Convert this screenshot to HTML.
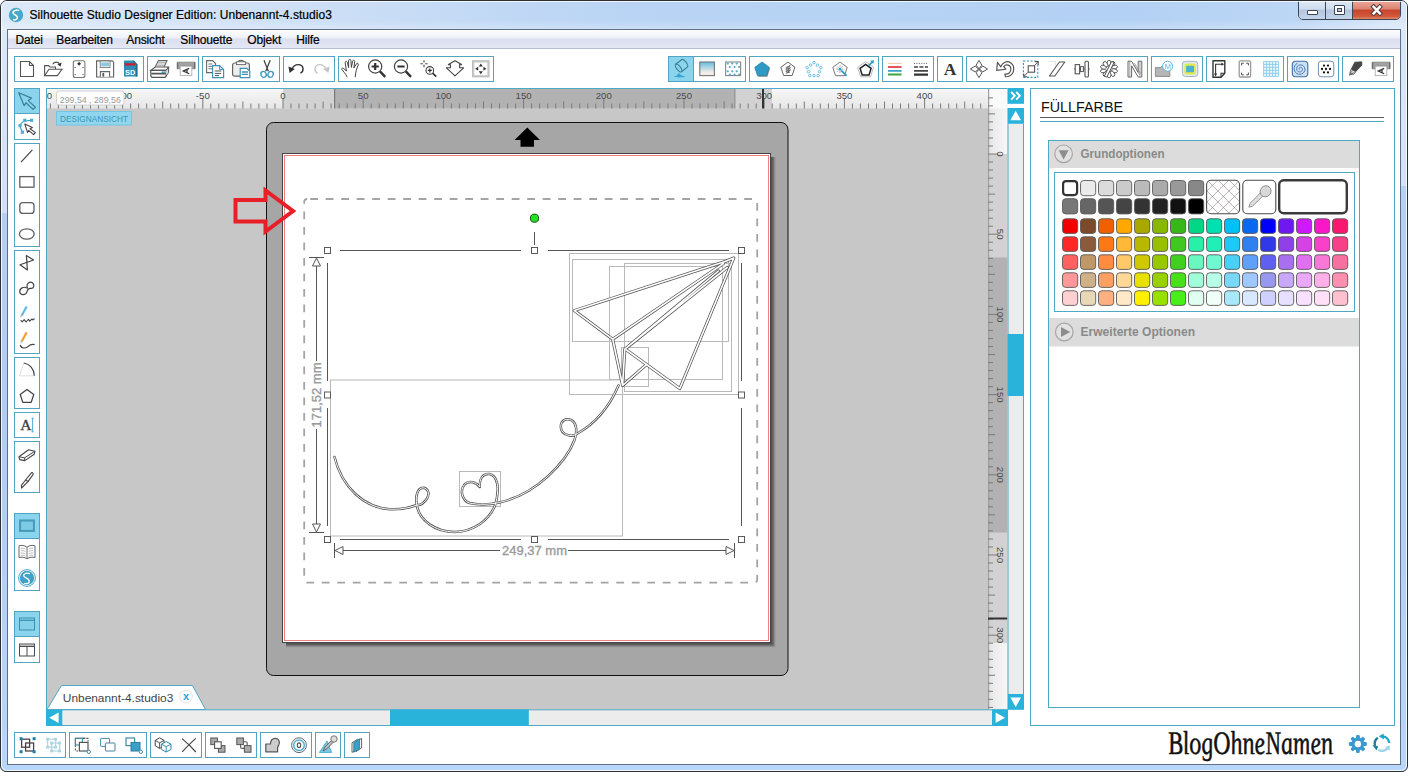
<!DOCTYPE html><html lang="de"><head><meta charset="utf-8"><title>Silhouette Studio Designer Edition: Unbenannt-4.studio3</title><style>

*{box-sizing:border-box;margin:0;padding:0}
html,body{width:1408px;height:772px;overflow:hidden;background:#fff}
body{position:relative;font-family:"Liberation Sans",sans-serif;font-size:12px;color:#000}
.abs{position:absolute}
#win{position:absolute;left:0;top:0;width:1408px;height:772px;border-radius:7px 7px 6px 6px;background:linear-gradient(#b9d3f3 0%,#b0cdf2 55%,#b7d6f9 100%);border:1px solid #2b2f36;overflow:hidden}
#win:before{content:"";position:absolute;left:0;top:0;right:0;bottom:0;border:1px solid rgba(255,255,255,.8);border-radius:6px;z-index:3}
#tbar{position:absolute;left:0;top:0;width:1406px;height:29px;background:linear-gradient(90deg,#dde9f8 0%,#cfe0f6 20%,#b9d4f4 45%,#b3d1f4 80%,#bcd6f5 92%,#d7e6f8 99%)}
#tbar:after{content:"";position:absolute;left:0;top:19px;width:100%;height:10px;background:linear-gradient(rgba(255,255,255,0),rgba(255,255,255,.28))}
#fl{position:absolute;left:0;top:29px;width:7px;height:183px;background:linear-gradient(#dbe8f8,#d0e0f5)}
#fr{position:absolute;left:1400px;top:29px;width:7px;height:156px;background:linear-gradient(#d9e7f8,#d2e2f6)}
#client{position:absolute;left:6px;top:28px;width:1394px;height:736px;background:#fff;border:1px solid #5e6f86}
#title{position:absolute;left:28.5px;top:7px;font-size:12px;line-height:15px;white-space:nowrap;color:#000;letter-spacing:.04px;-webkit-text-stroke:.2px #000}
#menubar{position:absolute;left:0;top:0;width:1392px;height:19px;background:linear-gradient(#fdfdfe 0%,#f0f2f9 42%,#dcdff0 50%,#e3e6f3 100%);border-bottom:1px solid #b9bdd0}
#menubar span{position:absolute;top:3px;letter-spacing:-.15px;-webkit-text-stroke:.2px #000;font-size:12px;line-height:15px;white-space:nowrap}
.grp{position:absolute;border:1px solid #51a5c0;background:#fff}
.ic{position:absolute;width:26px;height:26px}
.ic svg{position:absolute;left:0;top:0;width:26px;height:26px;overflow:visible}
.sel{background:#8ad4ee;box-shadow:inset 0 0 0 1px #51a5c0}


.t{font-family:"Liberation Sans",sans-serif}

</style></head><body>
<div id="win"><div id="tbar"></div><div id="fl"></div><div id="fr"></div>
<svg class="abs" style="left:7px;top:5.8px;width:16px;height:16px" viewBox="0 0 16 16"><circle cx="8" cy="8" r="7.2" fill="#45a9c9"/><path d="M10.6 3.4C8.4 2.6 5.2 3.6 5.0 5.6C4.8 7.6 9.0 7.8 9.4 10.2C9.7 12.2 7.4 13.2 5.6 12.8" fill="none" stroke="#fff" stroke-width="1.5" stroke-linecap="round"/></svg>
<div id="title">Silhouette Studio Designer Edition: Unbenannt-4.studio3</div>
<div class="abs" style="left:1297px;top:-1px;width:103px;height:20px;border:1px solid #3c4654;border-radius:0 0 5px 5px;overflow:hidden;background:#c4d5ea">
<div class="abs" style="left:0;top:0;width:27px;height:18px;background:linear-gradient(#dfe9f6 0%,#cfdcee 45%,#b4c6de 50%,#c3d4ea 100%);border-right:1px solid #3c4654"><div class="abs" style="left:8px;top:9px;width:11px;height:5px;border:1px solid #3d4450;background:#fff;border-radius:1px"></div></div>
<div class="abs" style="left:27px;top:0;width:27px;height:18px;background:linear-gradient(#dfe9f6 0%,#cfdcee 45%,#b4c6de 50%,#c3d4ea 100%);border-right:1px solid #3c4654"><div class="abs" style="left:8px;top:4px;width:11px;height:10px;border:1px solid #3d4450;background:#fff;border-radius:1px"><div class="abs" style="left:2px;top:2px;width:5px;height:4px;border:1px solid #3d4450;background:#bccbe0"></div></div></div>
<div class="abs" style="left:54px;top:0;width:48px;height:18px;background:linear-gradient(#e9a99a 0%,#dc8270 45%,#c8442c 50%,#d2583c 85%,#e08868 100%)"><svg class="abs" style="left:17px;top:3px;width:13px;height:12px" viewBox="0 0 13 12"><path d="M3.6 2.8L9.8 9.4M9.8 2.8L3.6 9.4" stroke="#45363c" stroke-width="4.4" stroke-linecap="square"/><path d="M3.6 2.8L9.8 9.4M9.8 2.8L3.6 9.4" stroke="#fff" stroke-width="2.5" stroke-linecap="square"/></svg></div>
</div>
<div id="client">
<div id="menubar">
<span style="left:7.5px">Datei</span>
<span style="left:48.3px">Bearbeiten</span>
<span style="left:118.3px">Ansicht</span>
<span style="left:172.3px">Silhouette</span>
<span style="left:239.3px">Objekt</span>
<span style="left:288.2px">Hilfe</span>
</div>
<div class="grp" style="left:6px;top:26px;width:130px;height:26px"><div class="ic" style="left:-1px;top:-1px"><svg viewBox="0 0 26 26"><path d="M6.5 5.5H15.5L19.5 9.5V20.5H6.5Z" fill="#fff" stroke="#555" stroke-width="1.1"/><path d="M15.5 5.5V9.5H19.5" fill="none" stroke="#555" stroke-width="1.1"/></svg></div><div class="ic" style="left:25px;top:-1px"><svg viewBox="0 0 26 26"><path d="M4.6 19.4V9.6H8.6L10 11H15.5V13" fill="none" stroke="#555" stroke-width="1.1"/><path d="M4.6 19.6L9 13.2H22L17.4 19.6Z" fill="#fff" stroke="#555" stroke-width="1.1"/><path d="M12.6 8.2C14.5 5.4 18.4 5.4 19.6 8.2" fill="none" stroke="#555" stroke-width="1.1"/><path d="M21.6 6.6L20.6 10.4L17.4 8.4Z" fill="#333"/></svg></div><div class="ic" style="left:51px;top:-1px"><svg viewBox="0 0 26 26"><rect x="7.3" y="4.7" width="11.6" height="16.8" rx="2" fill="#fff" stroke="#777" stroke-width="1.1"/><circle cx="13.1" cy="7.8" r="1.3" fill="#333"/><path d="M11.2 7.8H15M13.1 5.9V9.7" stroke="#333" stroke-width=".7"/><path d="M8.6 11.5H9.8M16.4 11.5H17.6M8.6 18.6H9.8M16.4 18.6H17.6" stroke="#555" stroke-width="1"/></svg></div><div class="ic" style="left:77px;top:-1px"><svg viewBox="0 0 26 26"><path d="M4.6 4.8H20.2L21.6 6.2V21H4.6Z" fill="#fff" stroke="#666" stroke-width="1.2"/><rect x="8.2" y="5" width="9.8" height="6.6" fill="#fff" stroke="#777" stroke-width=".9"/><rect x="9.2" y="6.4" width="7.8" height="4" fill="#8cc9e0"/><path d="M8.4 20.8V15.6H17.6V20.8" fill="#fff" stroke="#666" stroke-width="1.1"/><rect x="10.4" y="17" width="1.8" height="3.6" fill="#555"/></svg></div><div class="ic" style="left:103px;top:-1px"><svg viewBox="0 0 26 26"><path d="M6 4.6H15.6L19.4 8.2V20.6H6Z" fill="#2f8db5"/><path d="M15.6 4.6L19.4 8.2V20.6H17.8V8.8L14.4 4.6Z" fill="#1f6f93"/><rect x="6.6" y="7.2" width="10.6" height="2.3" fill="#c8202a"/><text x="7" y="18.8" font-size="7.4" font-weight="bold" fill="#fff" font-family="Liberation Sans, sans-serif">SD</text></svg></div></div>
<div class="grp" style="left:139px;top:26px;width:52px;height:26px"><div class="ic" style="left:-1px;top:-1px"><svg viewBox="0 0 26 26"><path d="M8.2 11L11.4 4.6H20L17 11" fill="#fff" stroke="#666" stroke-width="1.1"/><path d="M11 6.4H18.4M10.2 8H17.6M9.4 9.6H16.8" stroke="#999" stroke-width=".8"/><path d="M3.8 14.4L8.2 11H21.6L19.2 14.4Z" fill="#fff" stroke="#555" stroke-width="1.1"/><path d="M3.8 14.4H19.2V19.2Q19.2 21.4 17 21.4H6Q3.8 21.4 3.8 19.2Z" fill="#fff" stroke="#555" stroke-width="1.2"/><path d="M19.2 14.4L21.6 11V16.6L19.2 20" fill="#ddd" stroke="#555" stroke-width="1"/><path d="M4.4 17.6H18.8" stroke="#555" stroke-width="1.6"/><rect x="14.6" y="15.4" width="3.4" height="1.6" fill="#35a4cc"/></svg></div><div class="ic" style="left:25px;top:-1px"><svg viewBox="0 0 26 26"><path d="M4.2 6.2H22V12.8H18.8V10H7.4V12.8H4.2Z" fill="#a2a2a2" stroke="#7a7a7a" stroke-width=".8"/><path d="M4.6 6.6V12.4M21.6 6.6V12.4" stroke="#6a6a6a" stroke-width="1.2"/><rect x="7.2" y="10.2" width="11.6" height="9.4" fill="#fff" stroke="#b0b0b0" stroke-width=".9"/><path d="M16.2 12.4L10.2 15.1L16.2 17.8M14 13.5V16.7" fill="none" stroke="#333" stroke-width="1.2"/></svg></div></div>
<div class="grp" style="left:194px;top:26px;width:78px;height:26px"><div class="ic" style="left:-1px;top:-1px"><svg viewBox="0 0 26 26"><path d="M4.6 4.6H10.6L13.6 7.6V16.6H4.6Z" fill="#fff" stroke="#666" stroke-width="1.1"/><path d="M6.4 8H10.4M6.4 10.4H11.6M6.4 12.8H10" stroke="#777" stroke-width="1"/><path d="M10.6 9.6H17.6L21.6 13.6V21.6H10.6Z" fill="#fff" stroke="#3f93b2" stroke-width="1.2"/><path d="M17.6 9.6V13.6H21.6" fill="none" stroke="#3f93b2" stroke-width="1"/><path d="M12.8 15H19.2M12.8 17.4H19.2M12.8 19.6H17" stroke="#555" stroke-width="1"/></svg></div><div class="ic" style="left:25px;top:-1px"><svg viewBox="0 0 26 26"><path d="M10 6.6C10 3.6 16 3.6 16 6.6" fill="none" stroke="#666" stroke-width="1.1"/><rect x="4.6" y="7" width="16.8" height="13.2" rx="2" fill="#eee" stroke="#666" stroke-width="1.2"/><rect x="8.4" y="5.8" width="9.2" height="2.8" fill="#fff" stroke="#666" stroke-width=".9"/><path d="M12.2 12.4H18.8L21.8 15.2V21.6H12.2Z" fill="#fff" stroke="#3f93b2" stroke-width="1.2"/><path d="M13.8 16H20M13.8 18.4H20" stroke="#3f93b2" stroke-width="1.3"/></svg></div><div class="ic" style="left:51px;top:-1px"><svg viewBox="0 0 26 26"><path d="M10 4.2L14.4 15.2M16.2 4.2L11.8 15.2" fill="none" stroke="#444" stroke-width="1.3"/><ellipse cx="9.6" cy="18.4" rx="2.6" ry="3" transform="rotate(-25 9.6 18.4)" fill="none" stroke="#3a9bbd" stroke-width="1.3"/><ellipse cx="16.6" cy="18.4" rx="2.6" ry="3" transform="rotate(25 16.6 18.4)" fill="none" stroke="#3a9bbd" stroke-width="1.3"/></svg></div></div>
<div class="grp" style="left:275px;top:26px;width:52px;height:26px"><div class="ic" style="left:-1px;top:-1px"><svg viewBox="0 0 26 26"><path d="M9 13C11.5 7 19.5 7.4 20 12.6C20.2 15 18.8 16.6 17.4 17.2" fill="none" stroke="#333" stroke-width="1.4"/><path d="M5.4 10.4L6.6 17L11.8 13Z" fill="#333"/></svg></div><div class="ic" style="left:25px;top:-1px"><svg viewBox="0 0 26 26"><path d="M17 13C14.5 7 6.5 7.4 6 12.6C5.8 15 7.2 16.6 8.6 17.2" fill="none" stroke="#c6c6c6" stroke-width="1.4"/><path d="M20.6 10.4L19.4 17L14.2 13Z" fill="#c6c6c6"/></svg></div></div>
<div class="grp" style="left:330px;top:26px;width:156px;height:26px"><div class="ic" style="left:-1px;top:-1px"><svg viewBox="0 0 26 26"><path d="M9.2 21.2C7.6 17.6 5.4 15.6 3.8 13.4C3.4 12.2 4.8 11.6 5.8 12.6L8.4 15L7.2 6.6C7 5 9 4.8 9.4 6.4L10.6 11.6L10.6 4.6C10.6 3 12.8 3 12.9 4.6L13.4 11.4L14.6 5.2C14.9 3.8 16.9 4.2 16.7 5.8L15.9 12L18.4 7.8C19.2 6.6 20.9 7.6 20.3 8.9C18.4 13 17.6 16.4 17.2 21.2" fill="#fff" stroke="#444" stroke-width="1"/></svg></div><div class="ic" style="left:25px;top:-1px"><svg viewBox="0 0 26 26"><circle cx="11.2" cy="10.5" r="6.6" fill="#fff" stroke="#444" stroke-width="1.2"/><path d="M7.6 10.5H14.8M11.2 6.9V14.1" stroke="#333" stroke-width="2.2"/><path d="M16 15.4L21.2 20.8" stroke="#333" stroke-width="2.4"/></svg></div><div class="ic" style="left:51px;top:-1px"><svg viewBox="0 0 26 26"><circle cx="11" cy="10.5" r="6.6" fill="#fff" stroke="#444" stroke-width="1.2"/><path d="M7.4 10.5H14.6" stroke="#333" stroke-width="2.2"/><path d="M15.8 15.4L21 20.8" stroke="#333" stroke-width="2.4"/></svg></div><div class="ic" style="left:77px;top:-1px"><svg viewBox="0 0 26 26"><path d="M8 4.2V6.6M8 8.8V11.2M4.4 7.7H6.8M9.2 7.7H11.6" stroke="#444" stroke-width="1.1"/><circle cx="13.8" cy="14.4" r="3.8" fill="#fff" stroke="#444" stroke-width="1.1"/><path d="M11.8 14.4H15.8M13.8 12.4V16.4" stroke="#333" stroke-width="1.3"/><path d="M16.6 17.2L20.2 20.6" stroke="#333" stroke-width="1.8"/></svg></div><div class="ic" style="left:103px;top:-1px"><svg viewBox="0 0 26 26"><path d="M4.4 11.8H8.4V8.6H6.4L13 4.8L19.6 8.6H17.6V11.8H21.6L13 19.8Z" fill="#fff" stroke="#444" stroke-width="1.1" stroke-linejoin="round"/></svg></div><div class="ic" style="left:129px;top:-1px"><svg viewBox="0 0 26 26"><rect x="4.6" y="4.8" width="16.4" height="16" fill="#cfcfcf" stroke="#b5b5b5" stroke-width="1"/><rect x="6.4" y="6.6" width="12.8" height="12.4" fill="#fff"/><path d="M12.8 7.4L14.8 10.4H10.8ZM12.8 18.2L14.8 15.2H10.8ZM7.2 12.8L10.2 10.8V14.8ZM18.4 12.8L15.4 10.8V14.8Z" fill="#333"/></svg></div></div>
<div class="grp" style="left:660px;top:26px;width:78px;height:26px"><div class="ic sel" style="left:-1px;top:-1px"><svg viewBox="0 0 26 26"><g transform="translate(10.6 12) rotate(-38)" fill="none" stroke="#3f8198" stroke-width="1.2"><path d="M0 -4.7H7.4A2 4.7 0 0 1 7.4 4.7H0"/><ellipse cx="0" cy="0" rx="2" ry="4.7"/></g><path d="M5.4 20.6C7.6 20.4 9.6 19.4 10.8 16.8C11.8 18.6 14.4 20.2 17.6 20.6C14.4 21.8 8.6 21.8 5.4 20.6Z" fill="#3ba5cd"/></svg></div><div class="ic" style="left:25px;top:-1px"><svg viewBox="0 0 26 26"><defs><linearGradient id="gg" x1="0" y1="0" x2="0" y2="1"><stop offset="0" stop-color="#62bce0"/><stop offset=".75" stop-color="#f2ece6"/><stop offset="1" stop-color="#f6f0ea"/></linearGradient></defs><rect x="5.8" y="6" width="14.6" height="13.6" fill="url(#gg)" stroke="#777" stroke-width="1.1"/></svg></div><div class="ic" style="left:51px;top:-1px"><svg viewBox="0 0 26 26"><rect x="5.6" y="6" width="15" height="13.6" fill="#fff" stroke="#888" stroke-width="1.1"/><circle cx="7.8" cy="7.6" r="1.1" fill="#55a9c6"/><circle cx="12.2" cy="7.6" r="1.1" fill="#55a9c6"/><circle cx="16.7" cy="7.6" r="1.1" fill="#55a9c6"/><circle cx="9.8" cy="11.0" r="1.1" fill="#55a9c6"/><circle cx="14.6" cy="11.0" r="1.1" fill="#55a9c6"/><circle cx="19.1" cy="11.0" r="1.1" fill="#55a9c6"/><circle cx="7.8" cy="15.3" r="1.1" fill="#55a9c6"/><circle cx="12.2" cy="15.3" r="1.1" fill="#55a9c6"/><circle cx="16.7" cy="15.3" r="1.1" fill="#55a9c6"/><circle cx="9.8" cy="18.6" r="1.1" fill="#55a9c6"/><circle cx="14.6" cy="18.6" r="1.1" fill="#55a9c6"/><circle cx="19.1" cy="18.6" r="1.1" fill="#55a9c6"/></svg></div></div>
<div class="grp" style="left:741px;top:26px;width:130px;height:26px"><div class="ic" style="left:-1px;top:-1px"><svg viewBox="0 0 26 26"><path d="M13.9 7.0L21.1 12.3L18.4 20.7L9.4 20.7L6.7 12.3Z" fill="#8a8a8a"/><path d="M13.0 6.0L20.2 11.3L17.5 19.7L8.5 19.7L5.8 11.3Z" fill="#2f9ac4" stroke="#2a86ab" stroke-width=".8"/></svg></div><div class="ic" style="left:25px;top:-1px"><svg viewBox="0 0 26 26"><path d="M12.9 6.1L19.9 11.2L17.2 19.5L8.6 19.5L5.9 11.2Z" fill="#fff" stroke="#666" stroke-width="1"/><path d="M10.6 11.8L15.2 9.6L10.8 13.6L15.6 11.6L10.8 15.6L15.6 13.8L11.4 17.2L15 16" fill="none" stroke="#555" stroke-width=".9" stroke-linejoin="round"/></svg></div><div class="ic" style="left:51px;top:-1px"><svg viewBox="0 0 26 26"><circle cx="13.0" cy="6.6" r="1.25" fill="#fff" stroke="#4ab0d8" stroke-width=".8"/><circle cx="16.4" cy="9.1" r="1.25" fill="#fff" stroke="#4ab0d8" stroke-width=".8"/><circle cx="19.8" cy="11.6" r="1.25" fill="#fff" stroke="#4ab0d8" stroke-width=".8"/><circle cx="18.5" cy="15.6" r="1.25" fill="#fff" stroke="#4ab0d8" stroke-width=".8"/><circle cx="17.2" cy="19.6" r="1.25" fill="#fff" stroke="#4ab0d8" stroke-width=".8"/><circle cx="13.0" cy="19.6" r="1.25" fill="#fff" stroke="#4ab0d8" stroke-width=".8"/><circle cx="8.8" cy="19.6" r="1.25" fill="#fff" stroke="#4ab0d8" stroke-width=".8"/><circle cx="7.5" cy="15.6" r="1.25" fill="#fff" stroke="#4ab0d8" stroke-width=".8"/><circle cx="6.2" cy="11.6" r="1.25" fill="#fff" stroke="#4ab0d8" stroke-width=".8"/><circle cx="9.6" cy="9.1" r="1.25" fill="#fff" stroke="#4ab0d8" stroke-width=".8"/></svg></div><div class="ic" style="left:77px;top:-1px"><svg viewBox="0 0 26 26"><path d="M13.0 6.0L20.2 11.3L17.5 19.7L8.5 19.7L5.8 11.3Z" fill="#fff" stroke="#666" stroke-width=".9"/><path d="M13 9.4V11.4M13 15V17M9 13.2H11M15 13.2H16.4M10.2 10.4L11.6 11.8M10.2 16L11.6 14.6M15.8 10.4L14.4 11.8" stroke="#999" stroke-width=".8"/><circle cx="13" cy="13.2" r="1.4" fill="#2f9ac4"/><path d="M14.2 14.4L19.6 19.8" stroke="#2f9ac4" stroke-width="1.8"/></svg></div><div class="ic" style="left:103px;top:-1px"><svg viewBox="0 0 26 26"><path d="M12.6 5.6L20.6 11.4L17.5 20.8L7.7 20.8L4.6 11.4Z" fill="none" stroke="#aaa" stroke-width=".8"/><path d="M12.6 8.4L18.1 12.4L16.0 18.9L9.2 18.9L7.1 12.4Z" fill="#fff" stroke="#222" stroke-width="1.5"/><path d="M15.6 9.6L19.6 5.6" stroke="#2f9ac4" stroke-width="1.6"/><path d="M21 4.2L20.4 8L17.2 4.8Z" fill="#2f9ac4"/></svg></div></div>
<div class="grp" style="left:874px;top:26px;width:52px;height:26px"><div class="ic" style="left:-1px;top:-1px"><svg viewBox="0 0 26 26"><path d="M6 7.4H19.6" stroke="#f1c8a0" stroke-width="1"/><path d="M6 11H19.6" stroke="#e0555a" stroke-width="1.8"/><path d="M6 14.8H19.6" stroke="#3aa0c8" stroke-width="1.8"/><path d="M6 18.6H19.6" stroke="#3aa63a" stroke-width="2"/></svg></div><div class="ic" style="left:25px;top:-1px"><svg viewBox="0 0 26 26"><path d="M6 7.4H20" stroke="#555" stroke-width="1" stroke-dasharray="1 1.4"/><path d="M6 11H20" stroke="#444" stroke-width="1.5" stroke-dasharray="4 1.4"/><path d="M6 14.8H20" stroke="#444" stroke-width="1.8"/><path d="M6 18.6H20" stroke="#333" stroke-width="2.2"/></svg></div></div>
<div class="grp" style="left:929px;top:26px;width:26px;height:26px"><div class="ic" style="left:-1px;top:-1px"><svg viewBox="0 0 26 26"><text x="13" y="19.4" font-size="17.5" font-weight="bold" fill="#333" text-anchor="middle" font-family="Liberation Serif, serif">A</text></svg></div></div>
<div class="grp" style="left:958px;top:26px;width:182px;height:26px"><div class="ic" style="left:-1px;top:-1px"><svg viewBox="0 0 26 26"><path d="M13 4.4L15.9 9.2L13 12.7L10.1 9.2ZM13 21.6L15.9 16.8L13 13.3L10.1 16.8ZM4.4 13L9.2 10.1L12.7 13L9.2 15.9ZM21.6 13L16.8 10.1L13.3 13L16.8 15.9Z" fill="#fff" stroke="#555" stroke-width="1" stroke-linejoin="round"/></svg></div><div class="ic" style="left:25px;top:-1px"><svg viewBox="0 0 26 26"><path transform="translate(13.6 13) scale(1.2) translate(-13.4 -13.2)" d="M9.4 11.4C10.4 7.8 14.6 6 17.6 8C21.4 10.6 20.8 16.6 17 18.8C15.6 19.6 14.4 19.8 13.2 19.6L12.8 17.4C15.6 18 18 15.8 17.8 13C17.6 10 14 8.6 11.8 11.2L13.6 13.4L6 14.4L6.6 7.6Z" fill="#fff" stroke="#555" stroke-width="1" stroke-linejoin="round"/></svg></div><div class="ic" style="left:51px;top:-1px"><svg viewBox="0 0 26 26"><rect x="5.4" y="5" width="14.4" height="16.4" fill="none" stroke="#2f8db5" stroke-width="1.1" stroke-dasharray="2 1.6"/><rect x="10.2" y="9.8" width="6.4" height="6.4" fill="#fff" stroke="#555" stroke-width="1.1"/><path d="M16.4 9.8L19.4 6.4M9.8 16.4L6.4 20" stroke="#555" stroke-width="1"/><path d="M16.8 5.6H20.2V9M5.8 17.4V20.8H9.2" fill="none" stroke="#555" stroke-width="1.1"/></svg></div><div class="ic" style="left:77px;top:-1px"><svg viewBox="0 0 26 26"><path d="M5 5.6H11.6V20" fill="none" stroke="#e2e2e2" stroke-width="1"/><path d="M5.4 20L15.4 6H20.8L10.8 20Z" fill="#fff" stroke="#555" stroke-width="1.1" stroke-linejoin="round"/></svg></div><div class="ic" style="left:103px;top:-1px"><svg viewBox="0 0 26 26"><rect x="5.2" y="8.6" width="4.4" height="9.2" fill="#fff" stroke="#555" stroke-width="1.1"/><rect x="10.6" y="10.6" width="2.8" height="5" fill="#fff" stroke="#555" stroke-width="1"/><rect x="15" y="5.2" width="3.4" height="15.8" rx="1" fill="#fff" stroke="#555" stroke-width="1.1"/><path d="M4 13H5.2M9.6 13H10.6M13.4 13H15M18.4 13H19.8" stroke="#555" stroke-width="1"/></svg></div><div class="ic" style="left:129px;top:-1px"><svg viewBox="0 0 26 26"><ellipse cx="13" cy="7.2" rx="1.9" ry="3" transform="rotate(0 13 13)" fill="#fff" stroke="#555" stroke-width=".9"/><ellipse cx="13" cy="7.2" rx="1.9" ry="3" transform="rotate(36 13 13)" fill="#fff" stroke="#555" stroke-width=".9"/><ellipse cx="13" cy="7.2" rx="1.9" ry="3" transform="rotate(72 13 13)" fill="#fff" stroke="#555" stroke-width=".9"/><ellipse cx="13" cy="7.2" rx="1.9" ry="3" transform="rotate(108 13 13)" fill="#fff" stroke="#555" stroke-width=".9"/><ellipse cx="13" cy="7.2" rx="1.9" ry="3" transform="rotate(144 13 13)" fill="#fff" stroke="#555" stroke-width=".9"/><ellipse cx="13" cy="7.2" rx="1.9" ry="3" transform="rotate(180 13 13)" fill="#fff" stroke="#555" stroke-width=".9"/><ellipse cx="13" cy="7.2" rx="1.9" ry="3" transform="rotate(216 13 13)" fill="#fff" stroke="#555" stroke-width=".9"/><ellipse cx="13" cy="7.2" rx="1.9" ry="3" transform="rotate(252 13 13)" fill="#fff" stroke="#555" stroke-width=".9"/><ellipse cx="13" cy="7.2" rx="1.9" ry="3" transform="rotate(288 13 13)" fill="#fff" stroke="#555" stroke-width=".9"/><ellipse cx="13" cy="7.2" rx="1.9" ry="3" transform="rotate(324 13 13)" fill="#fff" stroke="#555" stroke-width=".9"/><path d="M8.4 20L15.6 5.4L18 6.6L10.8 21.2Z" fill="#fff" stroke="#555" stroke-width="1"/></svg></div><div class="ic" style="left:155px;top:-1px"><svg viewBox="0 0 26 26"><path d="M6 5.2H9.6L16.2 16.4V5.2H19.8V21H16.2L9.6 9.8V21H6Z" fill="#fff" stroke="#666" stroke-width="1"/><path d="M7.8 5.4V21M11 7.6L17.6 18.8M12.4 7.2L18.6 17.8M18 5.4V21" stroke="#888" stroke-width=".8" fill="none"/></svg></div></div>
<div class="grp" style="left:1143px;top:26px;width:52px;height:26px"><div class="ic" style="left:-1px;top:-1px"><svg viewBox="0 0 26 26"><path d="M4.4 11.6H9.6L10.6 10.4H18.8V20.4H4.4Z" fill="#b6b6b6" stroke="#8c8c8c" stroke-width="1"/><circle cx="16.6" cy="10.2" r="5" fill="#fff" stroke="#5bb8dc" stroke-width="1"/><text x="16.6" y="13" font-size="7.6" fill="#5bb8dc" text-anchor="middle" font-family="Liberation Sans, sans-serif">M</text></svg></div><div class="ic" style="left:25px;top:-1px"><svg viewBox="0 0 26 26"><rect x="5.4" y="5.3" width="15.4" height="15.2" rx="3" fill="#e4e9ee" stroke="#9db6cc" stroke-width="1"/><rect x="7.3" y="7.4" width="11.6" height="11.2" rx="2" fill="#e2ea4c"/><path d="M9.2 9.8Q9.9 10.5 10.6 9.8T12 9.8T13.4 9.8T14.8 9.8T16.2 9.8T17 9.8V16.2Q16.3 15.6 15.6 16.2T14.2 16.2T12.8 16.2T11.4 16.2T10 16.2T9.2 16.2Z" fill="#49b0d8"/></svg></div></div>
<div class="grp" style="left:1198px;top:26px;width:78px;height:26px"><div class="ic" style="left:-1px;top:-1px"><svg viewBox="0 0 26 26"><path d="M7 4.8H18.8V17.2L15 21.2H7Z" fill="#fff" stroke="#333" stroke-width="1.4" stroke-linejoin="round"/><path d="M18.8 17.2H15V21.2" fill="none" stroke="#333" stroke-width="1.1"/><path d="M9.6 18V8.2H16" fill="none" stroke="#333" stroke-width="1.1"/><path d="M9.6 20.4L8 17.6H11.2ZM18.2 8.2L15.4 6.6V9.8Z" fill="#333"/></svg></div><div class="ic" style="left:25px;top:-1px"><svg viewBox="0 0 26 26"><rect x="7.2" y="4.8" width="11.4" height="16.2" rx="1.2" fill="#fff" stroke="#9a9a9a" stroke-width="1.3"/><path d="M9.6 9.4V7.2H11.8M14.2 7.2H16.4V9.4M9.6 16.6V18.8H11.8M14.2 18.8H16.4V16.6" fill="none" stroke="#4a4a4a" stroke-width="1"/></svg></div><div class="ic" style="left:51px;top:-1px"><svg viewBox="0 0 26 26"><rect x="5.6" y="5.4" width="15" height="15" fill="#eaf6fb"/><path d="M5.6 5.4V20.4M8.6 5.4V20.4M11.6 5.4V20.4M14.6 5.4V20.4M17.6 5.4V20.4M20.6 5.4V20.4M5.6 5.4H20.6M5.6 8.4H20.6M5.6 11.4H20.6M5.6 14.4H20.6M5.6 17.4H20.6M5.6 20.4H20.6" stroke="#8ccde8" stroke-width=".9"/></svg></div></div>
<div class="grp" style="left:1279px;top:26px;width:52px;height:26px"><div class="ic" style="left:-1px;top:-1px"><svg viewBox="0 0 26 26"><rect x="5.3" y="5.3" width="15.5" height="15.4" rx="3.4" fill="#cfe0f3" stroke="#3c6ea8" stroke-width="1.1"/><path d="M12.5 13.5L12.3 13.4L12.1 13.1L12.0 12.8L12.0 12.4L12.1 12.0L12.4 11.7L12.8 11.4L13.3 11.3L13.8 11.3L14.4 11.5L14.9 11.9L15.2 12.4L15.4 13.1L15.4 13.8L15.2 14.5L14.7 15.1L14.0 15.6L13.2 15.9L12.3 15.9L11.4 15.6L10.6 15.1L10.0 14.3L9.6 13.3L9.6 12.3L9.8 11.2L10.4 10.2L11.3 9.5L12.4 9.0L13.7 8.9L14.9 9.1L16.1 9.7L17.0 10.7L17.6 11.9L17.9 13.3L17.7 14.8L17.0 16.1L16.0 17.2L14.6 18.0L13.1 18.3L11.5 18.2L9.9 17.6L8.6 16.5L7.7 15.1L7.2 13.4L7.2 11.6L7.8 9.8L8.9 8.3L10.4 7.2" fill="none" stroke="#4d7db6" stroke-width="1" stroke-linejoin="round"/></svg></div><div class="ic" style="left:25px;top:-1px"><svg viewBox="0 0 26 26"><rect x="5.4" y="5.2" width="15.4" height="15.6" rx="2.8" fill="#fff" stroke="#7590ad" stroke-width="1"/><circle cx="11.0" cy="9.6" r="1.15" fill="#111"/><circle cx="15.0" cy="9.6" r="1.15" fill="#111"/><circle cx="9.0" cy="13.0" r="1.15" fill="#111"/><circle cx="13.0" cy="13.0" r="1.15" fill="#111"/><circle cx="17.0" cy="13.0" r="1.15" fill="#111"/><circle cx="11.0" cy="16.4" r="1.15" fill="#111"/><circle cx="15.0" cy="16.4" r="1.15" fill="#111"/></svg></div></div>
<div class="grp" style="left:1334px;top:26px;width:52px;height:26px"><div class="ic" style="left:-1px;top:-1px"><svg viewBox="0 0 26 26"><path d="M12.8 6.2L19.8 5.8V9.2L13.7 15.7L9.1 13.6Z" fill="#454545" stroke="#454545" stroke-width=".8" stroke-linejoin="round"/><path d="M9.1 13.6L13.7 15.7L12 18.2L7.9 16.5Z" fill="#fff" stroke="#555" stroke-width=".9" stroke-linejoin="round"/><path d="M8.5 15.2L12.9 17" stroke="#777" stroke-width=".7"/><path d="M7.9 16.5L12 18.2L6.7 19.8Z" fill="#666"/></svg></div><div class="ic" style="left:25px;top:-1px"><svg viewBox="0 0 26 26"><path d="M4.2 6.2H22V12.8H18.8V10H7.4V12.8H4.2Z" fill="#a2a2a2" stroke="#7a7a7a" stroke-width=".8"/><path d="M4.6 6.6V12.4M21.6 6.6V12.4" stroke="#6a6a6a" stroke-width="1.2"/><rect x="7.2" y="10.2" width="11.6" height="9.4" fill="#fff" stroke="#b0b0b0" stroke-width=".9"/><path d="M16.2 12.4L10.2 15.1L16.2 17.8M14 13.5V16.7" fill="none" stroke="#333" stroke-width="1.2"/></svg></div></div>
<div class="grp" style="left:6px;top:58px;width:26px;height:52px"><div class="ic sel" style="left:-1px;top:-1px"><svg viewBox="0 0 26 26"><path d="M4.7 4.7L17.6 10.1L14.2 12.6L21.4 19.2L19 21.4L12 14.8L10.1 17.6Z" fill="none" stroke="#3a7e96" stroke-width="1.2" stroke-linejoin="round"/></svg></div><div class="ic" style="left:-1px;top:25px"><svg viewBox="0 0 26 26"><path d="M6 11.6C6.6 8 9.6 6.4 17.6 6.2M6 11.6C6.4 14.6 7.6 16.6 8.4 18.2" fill="none" stroke="#3a9bbd" stroke-width="1.1"/><rect x="9.2" y="4.7" width="3.2" height="3.2" fill="#4ab0d6"/><rect x="16" y="4.7" width="3.2" height="3.2" fill="#4ab0d6"/><rect x="4.4" y="10.1" width="3.2" height="3.2" fill="#4ab0d6"/><rect x="6.8" y="16.6" width="3.2" height="3.2" fill="#4ab0d6"/><path d="M10.8 10.1L18.4 13.6L16 14.8L21.4 18.6L19.6 20.6L14.6 16.4L13.5 18.4Z" fill="#fff" stroke="#444" stroke-width="1.1" stroke-linejoin="round"/></svg></div></div>
<div class="grp" style="left:6px;top:113px;width:26px;height:104px"><div class="ic" style="left:-1px;top:-1px"><svg viewBox="0 0 26 26"><path d="M7 19.2L18.4 6.8" stroke="#444" stroke-width="1.2"/></svg></div><div class="ic" style="left:-1px;top:25px"><svg viewBox="0 0 26 26"><rect x="5.8" y="7.6" width="14.2" height="10.6" fill="#fff" stroke="#5e5e5e" stroke-width="1.3"/></svg></div><div class="ic" style="left:-1px;top:51px"><svg viewBox="0 0 26 26"><rect x="5.8" y="7.6" width="14.2" height="10.8" rx="3" fill="#fff" stroke="#5e5e5e" stroke-width="1.3"/></svg></div><div class="ic" style="left:-1px;top:77px"><svg viewBox="0 0 26 26"><ellipse cx="12.8" cy="13" rx="7.4" ry="5.2" fill="#fff" stroke="#5e5e5e" stroke-width="1.3"/></svg></div></div>
<div class="grp" style="left:6px;top:220px;width:26px;height:104px"><div class="ic" style="left:-1px;top:-1px"><svg viewBox="0 0 26 26"><path d="M12.4 5.6L19.6 10L6 14.8L13.4 20Z" fill="none" stroke="#444" stroke-width="1.2" stroke-linejoin="round"/></svg></div><div class="ic" style="left:-1px;top:25px"><svg viewBox="0 0 26 26"><path d="M12.8 12.2C10 10 5.2 12.2 5.8 16C6.4 19.6 11.8 19.6 13 15.6C13.8 12.8 14.6 12 16.8 12.4C19.8 12.8 21 8.8 18.4 6.8C15.8 5 12.6 7.2 13 10.4C13.1 11.2 13.3 11.8 13.6 12.4" fill="none" stroke="#444" stroke-width="1.2"/></svg></div><div class="ic" style="left:-1px;top:51px"><svg viewBox="0 0 26 26"><path d="M11.8 4.4L13.2 5.1L8.6 13.6L7.2 12.9Z" fill="#55b2e2" stroke="#55b2e2" stroke-width=".6"/><path d="M7.2 12.9L6.6 15L8.6 13.6Z" fill="#eee" stroke="#999" stroke-width=".5"/><path d="M6.6 18.2L8.2 19.8L10.2 17.6L12 20L14.4 17.4L15.8 19.2L18 16.8L19 18L20.6 16.6" fill="none" stroke="#444" stroke-width="1.1" stroke-linejoin="round"/></svg></div><div class="ic" style="left:-1px;top:77px"><svg viewBox="0 0 26 26"><path d="M11.8 4.2L13.2 4.9L8.6 13.4L7.2 12.7Z" fill="#f09a2a" stroke="#f09a2a" stroke-width=".6"/><path d="M7.2 12.7L6.6 14.8L8.6 13.4Z" fill="#eee" stroke="#999" stroke-width=".5"/><path d="M6.2 17C7.4 21 11.8 20.4 13.8 18.6C15.8 16.8 18.4 15.8 20.6 16.6" fill="none" stroke="#444" stroke-width="1.2"/></svg></div></div>
<div class="grp" style="left:6px;top:327px;width:26px;height:52px"><div class="ic" style="left:-1px;top:-1px"><svg viewBox="0 0 26 26"><path d="M9.8 6L5.4 18.8H20.4" fill="none" stroke="#e0e0e0" stroke-width="1"/><path d="M9.8 6C15.8 7 20 12 20.4 18.8" fill="none" stroke="#444" stroke-width="1.2"/></svg></div><div class="ic" style="left:-1px;top:25px"><svg viewBox="0 0 26 26"><path d="M13.0 6.4L19.8 11.4L17.2 19.4L8.8 19.4L6.2 11.4Z" fill="#fff" stroke="#444" stroke-width="1.3" stroke-linejoin="round"/></svg></div></div>
<div class="grp" style="left:6px;top:382px;width:26px;height:26px"><div class="ic" style="left:-1px;top:-1px"><svg viewBox="0 0 26 26"><text x="12" y="18.4" font-size="15.6" fill="#3c3c3c" stroke="#3c3c3c" stroke-width=".3" text-anchor="middle" font-family="Liberation Serif, serif">A</text><path d="M18.6 6.4V19.6M17.4 6.2H19.8M17.4 19.8H19.8" stroke="#3fa4cc" stroke-width=".9"/></svg></div></div>
<div class="grp" style="left:6px;top:411px;width:26px;height:52px"><div class="ic" style="left:-1px;top:-1px"><svg viewBox="0 0 26 26"><path d="M5 15.8L14.6 8.8L21 10.2L20.2 13.2L10.8 19.6L5.6 18.6Z" fill="#fff" stroke="#444" stroke-width="1.1" stroke-linejoin="round"/><path d="M5 15.8L10.6 16.8L20.6 10.4M10.6 16.8L10.8 19.6" fill="none" stroke="#444" stroke-width="1"/></svg></div><div class="ic" style="left:-1px;top:25px"><svg viewBox="0 0 26 26"><path d="M17.4 5.8C18.6 5.2 19.6 6.4 19 7.6L14 14.6L11.6 13Z" fill="#fff" stroke="#444" stroke-width="1.1" stroke-linejoin="round"/><path d="M11.6 13L14 14.6L7.6 21L7.4 18.4Z" fill="#fff" stroke="#444" stroke-width="1.1" stroke-linejoin="round"/></svg></div></div>
<div class="grp" style="left:6px;top:483px;width:26px;height:78px"><div class="ic sel" style="left:-1px;top:-1px"><svg viewBox="0 0 26 26"><rect x="5" y="6.4" width="16" height="12.6" fill="#4a9fc0"/><rect x="6.7" y="8.1" width="12.6" height="9.2" fill="#7ccae4" stroke="#3d8fae" stroke-width=".7"/></svg></div><div class="ic" style="left:-1px;top:25px"><svg viewBox="0 0 26 26"><path d="M13 8.2C10.4 6.2 7.4 6 5 6.8V18.6C7.6 17.8 10.6 18.2 13 19.8C15.4 18.2 18.4 17.8 21 18.6V6.8C18.6 6 15.6 6.2 13 8.2Z" fill="#fff" stroke="#666" stroke-width="1" stroke-linejoin="round"/><path d="M13 8.2V19.8" stroke="#666" stroke-width=".9"/><path d="M6.8 9.4C8.6 9 10.2 9.4 11.4 10.2M6.8 11.8C8.6 11.4 10.2 11.8 11.4 12.6M6.8 14.2C8.6 13.8 10.2 14.2 11.4 15M6.8 16.4C8.6 16 10.2 16.4 11.4 17.2M19.2 9.4C17.4 9 15.8 9.4 14.6 10.2M19.2 11.8C17.4 11.4 15.8 11.8 14.6 12.6M19.2 14.2C17.4 13.8 15.8 14.2 14.6 15M19.2 16.4C17.4 16 15.8 16.4 14.6 17.2" fill="none" stroke="#9a9a9a" stroke-width=".7"/></svg></div><div class="ic" style="left:-1px;top:51px"><svg viewBox="0 0 26 26"><circle cx="13" cy="13" r="8.4" fill="#fff" stroke="#3a9bbd" stroke-width=".9"/><circle cx="13" cy="13" r="7.2" fill="#3fa2c6"/><path d="M15.4 8.6C13.2 7.4 9.6 8.4 9.6 10.6C9.6 12.8 14.6 13 15.2 15.8C15.6 18.2 13 19.2 10.8 18.4" fill="none" stroke="#fff" stroke-width="1.3" stroke-linecap="round"/></svg></div></div>
<div class="grp" style="left:6px;top:581px;width:26px;height:52px"><div class="ic sel" style="left:-1px;top:-1px"><svg viewBox="0 0 26 26"><rect x="5.5" y="7" width="15" height="12" fill="#84cfe9" stroke="#3d8fae" stroke-width="1"/><path d="M5.5 9.3H20.5" stroke="#3d8fae" stroke-width="1.2"/></svg></div><div class="ic" style="left:-1px;top:25px"><svg viewBox="0 0 26 26"><rect x="5.5" y="7" width="15" height="12" fill="#fff" stroke="#4a4a4a" stroke-width="1"/><path d="M5.5 9.5H20.5M13 9.5V19" stroke="#4a4a4a" stroke-width="1"/><path d="M5.5 8.2H20.5" stroke="#888" stroke-width=".8"/></svg></div></div>
<div class="grp" style="left:6px;top:702px;width:52px;height:26px"><div class="ic" style="left:-1px;top:-1px"><svg viewBox="0 0 26 26"><rect x="7.6" y="7.2" width="8" height="8" fill="none" stroke="#4a4246" stroke-width="1.3"/><rect x="11.6" y="11" width="8" height="8" fill="none" stroke="#4a4246" stroke-width="1.3"/><rect x="5.6" y="5.2" width="3" height="3" fill="#1f7fa8"/><rect x="18.6" y="5.2" width="3" height="3" fill="#1f7fa8"/><rect x="5.6" y="18.2" width="3" height="3" fill="#1f7fa8"/><rect x="18.6" y="18.2" width="3" height="3" fill="#1f7fa8"/></svg></div><div class="ic" style="left:25px;top:-1px"><svg viewBox="0 0 26 26"><rect x="7.6" y="7.2" width="8" height="8" fill="none" stroke="#b9d7e2" stroke-width="1.3"/><rect x="11.6" y="11" width="8" height="8" fill="none" stroke="#b9d7e2" stroke-width="1.3"/><rect x="6.2" y="5.8" width="2.8" height="2.8" fill="#a9d4e4"/><rect x="14.2" y="5.8" width="2.8" height="2.8" fill="#a9d4e4"/><rect x="6.2" y="13.8" width="2.8" height="2.8" fill="#a9d4e4"/><rect x="14.2" y="13.8" width="2.8" height="2.8" fill="#a9d4e4"/><rect x="10.2" y="9.6" width="2.8" height="2.8" fill="#a9d4e4"/><rect x="18.2" y="9.6" width="2.8" height="2.8" fill="#a9d4e4"/><rect x="10.2" y="17.6" width="2.8" height="2.8" fill="#a9d4e4"/><rect x="18.2" y="17.6" width="2.8" height="2.8" fill="#a9d4e4"/></svg></div></div>
<div class="grp" style="left:61px;top:702px;width:78px;height:26px"><div class="ic" style="left:-1px;top:-1px"><svg viewBox="0 0 26 26"><path d="M6.4 15V6.4H16.4" fill="none" stroke="#555" stroke-width="1.1"/><rect x="6.4" y="6.4" width="7" height="6.6" fill="none" stroke="#3f8aa8" stroke-width="1.1"/><rect x="10.4" y="10.4" width="8.6" height="8.6" fill="#fff" stroke="#555" stroke-width="1.2"/><path d="M6.4 16.6V19H9M14 6.4H19V9.6" fill="none" stroke="#555" stroke-width="1.1" stroke-dasharray="2 1.4"/><circle cx="19.8" cy="19.8" r="1.7" fill="#fff" stroke="#3f8aa8" stroke-width="1"/></svg></div><div class="ic" style="left:25px;top:-1px"><svg viewBox="0 0 26 26"><rect x="5.6" y="6.4" width="9" height="8" rx=".6" fill="#fff" stroke="#3f8aa8" stroke-width="1"/><rect x="10.4" y="11" width="9.6" height="8" rx=".6" fill="#fff" stroke="#4a8199" stroke-width="1"/></svg></div><div class="ic" style="left:51px;top:-1px"><svg viewBox="0 0 26 26"><rect x="5" y="6" width="8.6" height="7.6" fill="#fff" stroke="#3f8aa8" stroke-width="1.2"/><rect x="10" y="10.4" width="9" height="8.6" fill="#3ba0c8" stroke="#2a7f9f" stroke-width="1"/><circle cx="19.8" cy="19.8" r="1.7" fill="#fff" stroke="#3f8aa8" stroke-width="1"/></svg></div></div>
<div class="grp" style="left:142px;top:702px;width:52px;height:26px"><div class="ic" style="left:-1px;top:-1px"><svg viewBox="0 0 26 26"><path d="M5.2 8.4L9.6 5.8L14 8.4V13.8L9.6 16.4L5.2 13.8Z" fill="#fff" stroke="#444" stroke-width="1" stroke-linejoin="round"/><path d="M5.2 8.4L9.6 10.8L14 8.4M9.6 10.8V16.4" fill="none" stroke="#444" stroke-width=".9"/><path d="M11.4 12.2L16.2 9.6L21 12.2V17.4L16.2 20L11.4 17.4Z" fill="#fff" stroke="#2f86a6" stroke-width="1" stroke-linejoin="round"/><path d="M11.4 12.2L16.2 14.6L21 12.2M16.2 14.6V20" fill="none" stroke="#2f86a6" stroke-width=".9"/></svg></div><div class="ic" style="left:25px;top:-1px"><svg viewBox="0 0 26 26"><path d="M6 6.6C11 10.6 16 15.6 19.8 20M19.8 6.4C15.6 10 10.4 15.4 6.2 19.8" fill="none" stroke="#444" stroke-width="1.2"/></svg></div></div>
<div class="grp" style="left:197px;top:702px;width:52px;height:26px"><div class="ic" style="left:-1px;top:-1px"><svg viewBox="0 0 26 26"><rect x="5.8" y="6" width="6.6" height="6.6" fill="#aaa" stroke="#555" stroke-width="1"/><rect x="13.4" y="13.6" width="6.6" height="6.6" fill="#aaa" stroke="#555" stroke-width="1"/><rect x="9.6" y="9.8" width="6.6" height="6.6" fill="#fff" stroke="#555" stroke-width="1.1"/></svg></div><div class="ic" style="left:25px;top:-1px"><svg viewBox="0 0 26 26"><rect x="9.6" y="9.8" width="6.6" height="6.6" rx="1.5" fill="#fff" stroke="#555" stroke-width="1.1"/><rect x="5.8" y="6" width="6.6" height="6.6" fill="#aaa" stroke="#555" stroke-width="1"/><rect x="13.4" y="13.6" width="6.6" height="6.6" fill="#aaa" stroke="#555" stroke-width="1"/></svg></div></div>
<div class="grp" style="left:252px;top:702px;width:52px;height:26px"><div class="ic" style="left:-1px;top:-1px"><svg viewBox="0 0 26 26"><path d="M5.8 19.8V12H10.4C10.4 8.4 12.4 6.2 15.6 6.4C19.2 6.6 20.4 10.6 18.6 13.4C17.8 14.6 17.6 15.2 17.6 16V19.8Z" fill="#ccc" stroke="#555" stroke-width="1.2" stroke-linejoin="round"/></svg></div><div class="ic" style="left:25px;top:-1px"><svg viewBox="0 0 26 26"><circle cx="13" cy="13.2" r="7.4" fill="#fff" stroke="#666" stroke-width="1"/><circle cx="13" cy="13.2" r="5.3" fill="#fff" stroke="#4fb0d8" stroke-width="1.5"/><ellipse cx="13" cy="13.2" rx="1.7" ry="2.3" fill="#fff" stroke="#555" stroke-width="1.1"/></svg></div></div>
<div class="grp" style="left:307px;top:702px;width:26px;height:26px"><div class="ic" style="left:-1px;top:-1px"><svg viewBox="0 0 26 26"><path d="M4.4 20.4L12 9L16.6 20.4Z" fill="#7cc8e2" stroke="#4ab0d6" stroke-width="1"/><path d="M8 19L10 14.8L16.6 8.4L18.4 10.2L11.8 16.8Z" fill="#bbb" stroke="#666" stroke-width="1"/><circle cx="19" cy="7" r="3.2" fill="#ddd" stroke="#777" stroke-width="1"/></svg></div></div>
<div class="grp" style="left:336px;top:702px;width:26px;height:26px"><div class="ic" style="left:-1px;top:-1px"><svg viewBox="0 0 26 26"><path d="M8 10.8L13.4 7.4V17L8 20.4Z" fill="#fff" stroke="#555" stroke-width=".9" stroke-linejoin="round"/><path d="M12 9.8L17.6 6.4V16L12 19.6Z" fill="#fff" stroke="#555" stroke-width=".9" stroke-linejoin="round"/><path d="M9.8 10.4L15.6 6.8V16.6L9.8 20.2Z" fill="#3ba0c8" stroke="#2a7f9f" stroke-width=".9" stroke-linejoin="round"/></svg></div></div>
<svg class="abs" style="left:38px;top:58px;width:978px;height:638px" viewBox="46 88 978 638"><rect x="46" y="88" width="978" height="638" fill="#c7c7c7"/><rect x="266.5" y="122.5" width="521.5" height="553" rx="7" fill="#a6a6a6" stroke="#111" stroke-width="1"/><path d="M527.3 127.5L540 140H534V146.8H520.5V140H514.6Z" fill="#000"/><rect x="286" y="157" width="489.5" height="490.3" fill="#969696"/><rect x="286" y="157" width="488.5" height="489.3" fill="#7c7c7c"/><rect x="286" y="157" width="487.5" height="488.3" fill="#666"/><rect x="286" y="157" width="486.5" height="487.3" fill="#555"/><rect x="282.5" y="153.5" width="488" height="489" fill="#fff" stroke="#444" stroke-width="1"/><rect x="284.5" y="155.5" width="484" height="485" fill="none" stroke="#ec8080" stroke-width="1"/><rect x="330.5" y="380.0" width="292.0" height="156.0" fill="none" stroke="#b9b9b9" stroke-width="1"/><rect x="569.5" y="253.5" width="169.0" height="141.0" fill="none" stroke="#b9b9b9" stroke-width="1"/><rect x="572.5" y="259.5" width="156.0" height="82.0" fill="none" stroke="#b9b9b9" stroke-width="1"/><rect x="609.5" y="266.5" width="113.0" height="113.0" fill="none" stroke="#b9b9b9" stroke-width="1"/><rect x="624.5" y="263.5" width="107.0" height="128.0" fill="none" stroke="#b9b9b9" stroke-width="1"/><rect x="621.5" y="347.5" width="27.0" height="39.0" fill="none" stroke="#b9b9b9" stroke-width="1"/><rect x="459.5" y="471.5" width="41.0" height="35.0" fill="none" stroke="#b9b9b9" stroke-width="1"/><path d="M725 261.5L574.3 310.6L612.7 339.2L723.5 263.5M612.7 339.2L622.6 385.5L624.8 349.2L727.2 267.5M718.5 271L624.8 349.2M626.5 350L679.8 388.5L733.8 258L725 261.5M622.6 385.5L645.8 365.2" fill="none" stroke="#555" stroke-width="3.1" stroke-linejoin="round" stroke-linecap="round"/><path d="M725 261.5L574.3 310.6L612.7 339.2L723.5 263.5M612.7 339.2L622.6 385.5L624.8 349.2L727.2 267.5M718.5 271L624.8 349.2M626.5 350L679.8 388.5L733.8 258L725 261.5M622.6 385.5L645.8 365.2" fill="none" stroke="#fff" stroke-width="1.6" stroke-linejoin="round" stroke-linecap="round"/><path d="M618.5 385.5C611 403 598 422 577.5 433.5C572 438 561 435 560.8 427C560.6 420 566 418.8 569.5 419.5C575 420.5 578.5 428 574.5 440C566 462 537 494 499.5 502.5C490 504.5 478 505 469.5 503C462 500.5 459.5 490 464.5 484.5C469.5 479.5 476.5 482.5 479.8 487C479 479 483 473 489.5 474C497 475.5 500.5 487 495 505.5C489 520 474 531.5 455 532C435 532 419 520 416.8 505C415 495 418 488 423 487.8C428 488 430 493.5 427 498.5C424 503 420 505.5 416.8 505C408 508.5 398 509.5 390 509.2C365 508 342 488 334.5 457" fill="none" stroke="#555" stroke-width="2.5" stroke-linejoin="round" stroke-linecap="round"/><path d="M618.5 385.5C611 403 598 422 577.5 433.5C572 438 561 435 560.8 427C560.6 420 566 418.8 569.5 419.5C575 420.5 578.5 428 574.5 440C566 462 537 494 499.5 502.5C490 504.5 478 505 469.5 503C462 500.5 459.5 490 464.5 484.5C469.5 479.5 476.5 482.5 479.8 487C479 479 483 473 489.5 474C497 475.5 500.5 487 495 505.5C489 520 474 531.5 455 532C435 532 419 520 416.8 505C415 495 418 488 423 487.8C428 488 430 493.5 427 498.5C424 503 420 505.5 416.8 505C408 508.5 398 509.5 390 509.2C365 508 342 488 334.5 457" fill="none" stroke="#fff" stroke-width="1.0" stroke-linejoin="round" stroke-linecap="round"/><rect x="304.2" y="199" width="453" height="383.7" rx="3" fill="none" stroke="#a4a4a4" stroke-width="1.8" stroke-dasharray="7.8 7.7" stroke-dashoffset="-3"/><path d="M340 250.5H521M548 250.5H729M340 539.5H521M548 539.5H729M327.5 263V381M327.5 408V526M741.5 263V381M741.5 408V526M534.5 232V245" stroke="#555" stroke-width="1" fill="none"/><rect x="324.5" y="247.5" width="6" height="6" fill="#fff" stroke="#5a5a5a" stroke-width="1"/><rect x="531.5" y="247.5" width="6" height="6" fill="#fff" stroke="#5a5a5a" stroke-width="1"/><rect x="738.5" y="247.5" width="6" height="6" fill="#fff" stroke="#5a5a5a" stroke-width="1"/><rect x="324.5" y="392.0" width="6" height="6" fill="#fff" stroke="#5a5a5a" stroke-width="1"/><rect x="738.5" y="392.0" width="6" height="6" fill="#fff" stroke="#5a5a5a" stroke-width="1"/><rect x="324.5" y="536.5" width="6" height="6" fill="#fff" stroke="#5a5a5a" stroke-width="1"/><rect x="531.5" y="536.5" width="6" height="6" fill="#fff" stroke="#5a5a5a" stroke-width="1"/><rect x="738.5" y="536.5" width="6" height="6" fill="#fff" stroke="#5a5a5a" stroke-width="1"/><circle cx="534.5" cy="218.2" r="4.1" fill="#22e022" stroke="#1d4d1d" stroke-width="1"/><path d="M334.5 543V558M734.5 543V558M343 550.5H500M568 550.5H726" stroke="#555" stroke-width="1" fill="none"/><path d="M335 550.5L343 546.5V554.5ZM734 550.5L726 546.5V554.5Z" fill="#fff" stroke="#555" stroke-width="1"/><text x="534.5" y="555.3" font-size="13" fill="#9a9a9a" stroke="#9a9a9a" stroke-width=".35" text-anchor="middle" font-family="Liberation Sans, sans-serif">249,37 mm</text><path d="M309 257.5H324M309 532.5H324M316.5 266V361M316.5 429V524" stroke="#555" stroke-width="1" fill="none"/><path d="M316.5 258L312.5 266H320.5ZM316.5 532L312.5 524H320.5Z" fill="#fff" stroke="#555" stroke-width="1"/><text transform="translate(321.3 395) rotate(-90)" font-size="13" fill="#9a9a9a" stroke="#9a9a9a" stroke-width=".35" text-anchor="middle" font-family="Liberation Sans, sans-serif">171,52 mm</text><path d="M235.5 200H265.5V190.5L293 211L265.5 231.5V221.5H235.5Z" fill="none" stroke="#e81f27" stroke-width="4" stroke-linejoin="miter"/><defs><linearGradient id="rl" x1="0" y1="0" x2="0" y2="1"><stop offset="0" stop-color="#f7f7f7"/><stop offset="1" stop-color="#e6e6e6"/></linearGradient><linearGradient id="rlv" x1="0" y1="0" x2="1" y2="0"><stop offset="0" stop-color="#e6e6e6"/><stop offset="1" stop-color="#f7f7f7"/></linearGradient></defs><rect x="47" y="89" width="941" height="19.5" fill="url(#rl)"/><rect x="283" y="89" width="489" height="19.5" fill="#d2d2d2"/><rect x="334.5" y="89" width="400.5" height="19.5" fill="#b2b2b2"/><rect x="334" y="89" width="1.2" height="19.5" fill="#7a7a7a"/><rect x="734.4" y="89" width="1" height="19.5" fill="#8a8a8a"/><path d="M50.4 108.5v-5.0M58.4 108.5v-5.0M66.5 108.5v-5.0M74.5 108.5v-5.0M82.5 108.5v-7.0M90.5 108.5v-5.0M98.5 108.5v-5.0M106.6 108.5v-5.0M114.6 108.5v-5.0M122.6 108.5v-10.5M130.6 108.5v-5.0M138.6 108.5v-5.0M146.7 108.5v-5.0M154.7 108.5v-5.0M162.7 108.5v-7.0M170.7 108.5v-5.0M178.7 108.5v-5.0M186.8 108.5v-5.0M194.8 108.5v-5.0M202.8 108.5v-10.5M210.8 108.5v-5.0M218.8 108.5v-5.0M226.9 108.5v-5.0M234.9 108.5v-5.0M242.9 108.5v-7.0M250.9 108.5v-5.0M258.9 108.5v-5.0M267.0 108.5v-5.0M275.0 108.5v-5.0M283.0 108.5v-10.5M291.0 108.5v-5.0M299.0 108.5v-5.0M307.1 108.5v-5.0M315.1 108.5v-5.0M323.1 108.5v-7.0M331.1 108.5v-5.0M339.1 108.5v-5.0M347.2 108.5v-5.0M355.2 108.5v-5.0M363.2 108.5v-10.5M371.2 108.5v-5.0M379.2 108.5v-5.0M387.3 108.5v-5.0M395.3 108.5v-5.0M403.3 108.5v-7.0M411.3 108.5v-5.0M419.3 108.5v-5.0M427.4 108.5v-5.0M435.4 108.5v-5.0M443.4 108.5v-10.5M451.4 108.5v-5.0M459.4 108.5v-5.0M467.5 108.5v-5.0M475.5 108.5v-5.0M483.5 108.5v-7.0M491.5 108.5v-5.0M499.5 108.5v-5.0M507.6 108.5v-5.0M515.6 108.5v-5.0M523.6 108.5v-10.5M531.6 108.5v-5.0M539.6 108.5v-5.0M547.7 108.5v-5.0M555.7 108.5v-5.0M563.7 108.5v-7.0M571.7 108.5v-5.0M579.7 108.5v-5.0M587.8 108.5v-5.0M595.8 108.5v-5.0M603.8 108.5v-10.5M611.8 108.5v-5.0M619.8 108.5v-5.0M627.9 108.5v-5.0M635.9 108.5v-5.0M643.9 108.5v-7.0M651.9 108.5v-5.0M659.9 108.5v-5.0M668.0 108.5v-5.0M676.0 108.5v-5.0M684.0 108.5v-10.5M692.0 108.5v-5.0M700.0 108.5v-5.0M708.1 108.5v-5.0M716.1 108.5v-5.0M724.1 108.5v-7.0M732.1 108.5v-5.0M740.1 108.5v-5.0M748.2 108.5v-5.0M756.2 108.5v-5.0M764.2 108.5v-10.5M772.2 108.5v-5.0M780.2 108.5v-5.0M788.3 108.5v-5.0M796.3 108.5v-5.0M804.3 108.5v-7.0M812.3 108.5v-5.0M820.3 108.5v-5.0M828.4 108.5v-5.0M836.4 108.5v-5.0M844.4 108.5v-10.5M852.4 108.5v-5.0M860.4 108.5v-5.0M868.5 108.5v-5.0M876.5 108.5v-5.0M884.5 108.5v-7.0M892.5 108.5v-5.0M900.5 108.5v-5.0M908.6 108.5v-5.0M916.6 108.5v-5.0M924.6 108.5v-10.5M932.6 108.5v-5.0M940.6 108.5v-5.0M948.7 108.5v-5.0M956.7 108.5v-5.0M964.7 108.5v-7.0M972.7 108.5v-5.0M980.7 108.5v-5.0" stroke="#7a7a7a" stroke-width="1" fill="none"/><text x="42.4" y="98.5" font-size="9.6" fill="#4a4a4a" text-anchor="middle" font-family="Liberation Sans, sans-serif">-150</text><text x="122.6" y="98.5" font-size="9.6" fill="#4a4a4a" text-anchor="middle" font-family="Liberation Sans, sans-serif">-100</text><text x="202.8" y="98.5" font-size="9.6" fill="#4a4a4a" text-anchor="middle" font-family="Liberation Sans, sans-serif">-50</text><text x="283.0" y="98.5" font-size="9.6" fill="#4a4a4a" text-anchor="middle" font-family="Liberation Sans, sans-serif">0</text><text x="363.2" y="98.5" font-size="9.6" fill="#4a4a4a" text-anchor="middle" font-family="Liberation Sans, sans-serif">50</text><text x="443.4" y="98.5" font-size="9.6" fill="#4a4a4a" text-anchor="middle" font-family="Liberation Sans, sans-serif">100</text><text x="523.6" y="98.5" font-size="9.6" fill="#4a4a4a" text-anchor="middle" font-family="Liberation Sans, sans-serif">150</text><text x="603.8" y="98.5" font-size="9.6" fill="#4a4a4a" text-anchor="middle" font-family="Liberation Sans, sans-serif">200</text><text x="684.0" y="98.5" font-size="9.6" fill="#4a4a4a" text-anchor="middle" font-family="Liberation Sans, sans-serif">250</text><text x="764.2" y="98.5" font-size="9.6" fill="#4a4a4a" text-anchor="middle" font-family="Liberation Sans, sans-serif">300</text><text x="844.4" y="98.5" font-size="9.6" fill="#4a4a4a" text-anchor="middle" font-family="Liberation Sans, sans-serif">350</text><text x="924.6" y="98.5" font-size="9.6" fill="#4a4a4a" text-anchor="middle" font-family="Liberation Sans, sans-serif">400</text><rect x="762" y="89" width="2" height="19.5" fill="#333"/><rect x="988" y="89" width="19.5" height="620.5" fill="url(#rlv)"/><rect x="988" y="89" width="19.5" height="19.5" fill="#fafafa"/><rect x="988" y="154" width="19.5" height="489" fill="#d2d2d2"/><rect x="988" y="257.5" width="19.5" height="275" fill="#b2b2b2"/><rect x="988" y="89" width="1.2" height="620.5" fill="#a0a0a0"/><path d="M988 97.9h5.0M988 105.9h5.0M988 113.9h7.0M988 121.9h5.0M988 129.9h5.0M988 138.0h5.0M988 146.0h5.0M988 154.0h10.5M988 162.0h5.0M988 170.0h5.0M988 178.1h5.0M988 186.1h5.0M988 194.1h7.0M988 202.1h5.0M988 210.1h5.0M988 218.2h5.0M988 226.2h5.0M988 234.2h10.5M988 242.2h5.0M988 250.2h5.0M988 258.3h5.0M988 266.3h5.0M988 274.3h7.0M988 282.3h5.0M988 290.3h5.0M988 298.4h5.0M988 306.4h5.0M988 314.4h10.5M988 322.4h5.0M988 330.4h5.0M988 338.5h5.0M988 346.5h5.0M988 354.5h7.0M988 362.5h5.0M988 370.5h5.0M988 378.6h5.0M988 386.6h5.0M988 394.6h10.5M988 402.6h5.0M988 410.6h5.0M988 418.7h5.0M988 426.7h5.0M988 434.7h7.0M988 442.7h5.0M988 450.7h5.0M988 458.8h5.0M988 466.8h5.0M988 474.8h10.5M988 482.8h5.0M988 490.8h5.0M988 498.9h5.0M988 506.9h5.0M988 514.9h7.0M988 522.9h5.0M988 530.9h5.0M988 539.0h5.0M988 547.0h5.0M988 555.0h10.5M988 563.0h5.0M988 571.0h5.0M988 579.1h5.0M988 587.1h5.0M988 595.1h7.0M988 603.1h5.0M988 611.1h5.0M988 619.2h5.0M988 627.2h5.0M988 635.2h10.5M988 643.2h5.0M988 651.2h5.0M988 659.3h5.0M988 667.3h5.0M988 675.3h7.0M988 683.3h5.0M988 691.3h5.0M988 699.4h5.0M988 707.4h5.0" stroke="#7a7a7a" stroke-width="1" fill="none"/><text transform="translate(996.8 154.0) rotate(90)" font-size="9.6" fill="#4a4a4a" text-anchor="middle" font-family="Liberation Sans, sans-serif">0</text><text transform="translate(996.8 234.2) rotate(90)" font-size="9.6" fill="#4a4a4a" text-anchor="middle" font-family="Liberation Sans, sans-serif">50</text><text transform="translate(996.8 314.4) rotate(90)" font-size="9.6" fill="#4a4a4a" text-anchor="middle" font-family="Liberation Sans, sans-serif">100</text><text transform="translate(996.8 394.6) rotate(90)" font-size="9.6" fill="#4a4a4a" text-anchor="middle" font-family="Liberation Sans, sans-serif">150</text><text transform="translate(996.8 474.8) rotate(90)" font-size="9.6" fill="#4a4a4a" text-anchor="middle" font-family="Liberation Sans, sans-serif">200</text><text transform="translate(996.8 555.0) rotate(90)" font-size="9.6" fill="#4a4a4a" text-anchor="middle" font-family="Liberation Sans, sans-serif">250</text><text transform="translate(996.8 635.2) rotate(90)" font-size="9.6" fill="#4a4a4a" text-anchor="middle" font-family="Liberation Sans, sans-serif">300</text><rect x="988" y="617.5" width="19.5" height="2" fill="#333"/><rect x="56.5" y="111.5" width="75" height="13.5" fill="#8fd6ee" stroke="#74c6e2" stroke-width="1"/><text x="94" y="121.6" font-size="8.8" fill="#3d97b5" text-anchor="middle" font-family="Liberation Sans, sans-serif" textLength="68" lengthAdjust="spacingAndGlyphs">DESIGNANSICHT</text><rect x="56.5" y="91" width="67.5" height="14" rx="2.5" fill="#fff" stroke="#d0d0d0" stroke-width="1"/><text x="90.3" y="102.6" font-size="9.6" fill="#9a9a9a" text-anchor="middle" font-family="Liberation Sans, sans-serif" textLength="61" lengthAdjust="spacingAndGlyphs">299,54 , 289,56</text><path d="M46.5 88V726M46 88.5H1024" stroke="#4fa9c4" stroke-width="1" fill="none"/><rect x="1007.5" y="88" width="16.5" height="622" fill="#fff"/><rect x="1008" y="124" width="15.5" height="570" fill="#ececec"/><path d="M1008 124V694M1023.5 124V694" stroke="#4fa9c4" stroke-width="1" fill="none"/><rect x="1007.5" y="88" width="16.5" height="15.8" fill="#29b2da"/><path d="M1011.2 92L1014.8 95.8L1011.2 99.6M1016.2 92L1019.8 95.8L1016.2 99.6" stroke="#fff" stroke-width="1.9" fill="none"/><rect x="1007.5" y="108" width="16.5" height="15.8" fill="#29b2da"/><path d="M1015.7 110.8L1021 120.2H1010.4Z" fill="#fff"/><rect x="1007.5" y="334" width="16.5" height="62" fill="#29b2da"/><rect x="1007.5" y="694" width="16.5" height="15.8" fill="#29b2da"/><path d="M1015.7 707L1021 697.6H1010.4Z" fill="#fff"/><rect x="46" y="709.5" width="962" height="16.5" fill="#ececec"/><path d="M46 709.8H1008M46 725.5H1008" stroke="#4fa9c4" stroke-width="1" fill="none"/><rect x="46" y="709.5" width="16.3" height="16.5" fill="#29b2da"/><path d="M49.2 717.7L58.6 712.4V723Z" fill="#fff"/><rect x="390" y="709.5" width="138.8" height="16.5" fill="#29b2da"/><rect x="992" y="709.5" width="16" height="16.5" fill="#29b2da"/><path d="M1005 717.7L995.6 712.4V723Z" fill="#fff"/><rect x="1008" y="710" width="16" height="16" fill="#fff"/><path d="M47 709.5L61.5 685.5H192.5L205.5 709.5Z" fill="#fff" stroke="#4fa9c4" stroke-width="1"/><circle cx="186" cy="696.5" r="6.3" fill="#fff" stroke="#e4e4e4" stroke-width="1"/><text x="186" y="700.4" font-size="11" font-weight="bold" fill="#22a7d6" text-anchor="middle" font-family="Liberation Sans, sans-serif">x</text><text x="62.8" y="702.3" font-size="10.8" fill="#444" font-family="Liberation Sans, sans-serif" textLength="110.5" lengthAdjust="spacingAndGlyphs">Unbenannt-4.studio3</text></svg>
<svg class="abs" style="left:1020px;top:56px;width:370px;height:680px" viewBox="1028 86 370 680"><rect x="1030.5" y="88.5" width="364" height="637" fill="#fff" stroke="#4fa9c4" stroke-width="1"/><text x="1041" y="111.8" font-size="14.2" fill="#111" font-family="Liberation Sans, sans-serif" textLength="82" lengthAdjust="spacingAndGlyphs">FÜLLFARBE</text><path d="M1040 117.5H1384" stroke="#5a5a5a" stroke-width="1"/><path d="M1040 121.5H1384" stroke="#4fa9c4" stroke-width="1"/><rect x="1048.5" y="140.5" width="311" height="567" fill="#fff" stroke="#4fa9c4" stroke-width="1"/><rect x="1049" y="141" width="310" height="27" fill="#dcdcdc"/><circle cx="1063.6" cy="153.8" r="8.8" fill="#e2e2e2" stroke="#a6a6a6" stroke-width="1.2"/><path d="M1058.6 150.2H1068.6L1063.6 159.4Z" fill="#8d8d8d"/><text x="1080.5" y="158" font-size="12.5" font-weight="bold" fill="#8a8a8a" font-family="Liberation Sans, sans-serif" textLength="84" lengthAdjust="spacingAndGlyphs">Grundoptionen</text><rect x="1054.5" y="172.5" width="300" height="139" fill="#fff" stroke="#4fa9c4" stroke-width="1"/><rect x="1063.1" y="181.1" width="14" height="14" rx="3" fill="#fff" stroke="#333" stroke-width="2.2"/><rect x="1080.5" y="180.5" width="15.2" height="15.2" rx="3.2" fill="#ebebeb" stroke="#5a5a5a" stroke-width=".9"/><rect x="1098.5" y="180.5" width="15.2" height="15.2" rx="3.2" fill="#dbdbdb" stroke="#5a5a5a" stroke-width=".9"/><rect x="1116.5" y="180.5" width="15.2" height="15.2" rx="3.2" fill="#cbcbcb" stroke="#5a5a5a" stroke-width=".9"/><rect x="1134.5" y="180.5" width="15.2" height="15.2" rx="3.2" fill="#bababa" stroke="#5a5a5a" stroke-width=".9"/><rect x="1152.5" y="180.5" width="15.2" height="15.2" rx="3.2" fill="#aaaaaa" stroke="#5a5a5a" stroke-width=".9"/><rect x="1170.5" y="180.5" width="15.2" height="15.2" rx="3.2" fill="#999999" stroke="#5a5a5a" stroke-width=".9"/><rect x="1188.5" y="180.5" width="15.2" height="15.2" rx="3.2" fill="#888888" stroke="#5a5a5a" stroke-width=".9"/><rect x="1062.5" y="198.7" width="15.2" height="15.2" rx="3.2" fill="#777777" stroke="#5a5a5a" stroke-width=".9"/><rect x="1080.5" y="198.7" width="15.2" height="15.2" rx="3.2" fill="#666666" stroke="#5a5a5a" stroke-width=".9"/><rect x="1098.5" y="198.7" width="15.2" height="15.2" rx="3.2" fill="#555555" stroke="#5a5a5a" stroke-width=".9"/><rect x="1116.5" y="198.7" width="15.2" height="15.2" rx="3.2" fill="#444444" stroke="#5a5a5a" stroke-width=".9"/><rect x="1134.5" y="198.7" width="15.2" height="15.2" rx="3.2" fill="#333333" stroke="#5a5a5a" stroke-width=".9"/><rect x="1152.5" y="198.7" width="15.2" height="15.2" rx="3.2" fill="#222222" stroke="#5a5a5a" stroke-width=".9"/><rect x="1170.5" y="198.7" width="15.2" height="15.2" rx="3.2" fill="#111111" stroke="#5a5a5a" stroke-width=".9"/><rect x="1188.5" y="198.7" width="15.2" height="15.2" rx="3.2" fill="#000000" stroke="#5a5a5a" stroke-width=".9"/><rect x="1062.5" y="218.8" width="15.2" height="14.6" rx="3.2" fill="#f00000" stroke="#5a5a5a" stroke-width=".9"/><rect x="1080.5" y="218.8" width="15.2" height="14.6" rx="3.2" fill="#7b4a2a" stroke="#5a5a5a" stroke-width=".9"/><rect x="1098.5" y="218.8" width="15.2" height="14.6" rx="3.2" fill="#f06000" stroke="#5a5a5a" stroke-width=".9"/><rect x="1116.5" y="218.8" width="15.2" height="14.6" rx="3.2" fill="#ffa800" stroke="#5a5a5a" stroke-width=".9"/><rect x="1134.5" y="218.8" width="15.2" height="14.6" rx="3.2" fill="#a8a800" stroke="#5a5a5a" stroke-width=".9"/><rect x="1152.5" y="218.8" width="15.2" height="14.6" rx="3.2" fill="#88b800" stroke="#5a5a5a" stroke-width=".9"/><rect x="1170.5" y="218.8" width="15.2" height="14.6" rx="3.2" fill="#38b818" stroke="#5a5a5a" stroke-width=".9"/><rect x="1188.5" y="218.8" width="15.2" height="14.6" rx="3.2" fill="#00d888" stroke="#5a5a5a" stroke-width=".9"/><rect x="1206.5" y="218.8" width="15.2" height="14.6" rx="3.2" fill="#00e0b0" stroke="#5a5a5a" stroke-width=".9"/><rect x="1224.5" y="218.8" width="15.2" height="14.6" rx="3.2" fill="#00c0f8" stroke="#5a5a5a" stroke-width=".9"/><rect x="1242.5" y="218.8" width="15.2" height="14.6" rx="3.2" fill="#0868f0" stroke="#5a5a5a" stroke-width=".9"/><rect x="1260.5" y="218.8" width="15.2" height="14.6" rx="3.2" fill="#0000f8" stroke="#5a5a5a" stroke-width=".9"/><rect x="1278.5" y="218.8" width="15.2" height="14.6" rx="3.2" fill="#7018f0" stroke="#5a5a5a" stroke-width=".9"/><rect x="1296.5" y="218.8" width="15.2" height="14.6" rx="3.2" fill="#d018f8" stroke="#5a5a5a" stroke-width=".9"/><rect x="1314.5" y="218.8" width="15.2" height="14.6" rx="3.2" fill="#f818c8" stroke="#5a5a5a" stroke-width=".9"/><rect x="1332.5" y="218.8" width="15.2" height="14.6" rx="3.2" fill="#f81870" stroke="#5a5a5a" stroke-width=".9"/><rect x="1062.5" y="236.8" width="15.2" height="14.6" rx="3.2" fill="#ff2828" stroke="#5a5a5a" stroke-width=".9"/><rect x="1080.5" y="236.8" width="15.2" height="14.6" rx="3.2" fill="#8b5a3a" stroke="#5a5a5a" stroke-width=".9"/><rect x="1098.5" y="236.8" width="15.2" height="14.6" rx="3.2" fill="#ff7818" stroke="#5a5a5a" stroke-width=".9"/><rect x="1116.5" y="236.8" width="15.2" height="14.6" rx="3.2" fill="#ffb838" stroke="#5a5a5a" stroke-width=".9"/><rect x="1134.5" y="236.8" width="15.2" height="14.6" rx="3.2" fill="#b8b800" stroke="#5a5a5a" stroke-width=".9"/><rect x="1152.5" y="236.8" width="15.2" height="14.6" rx="3.2" fill="#98c000" stroke="#5a5a5a" stroke-width=".9"/><rect x="1170.5" y="236.8" width="15.2" height="14.6" rx="3.2" fill="#40c820" stroke="#5a5a5a" stroke-width=".9"/><rect x="1188.5" y="236.8" width="15.2" height="14.6" rx="3.2" fill="#28f0a8" stroke="#5a5a5a" stroke-width=".9"/><rect x="1206.5" y="236.8" width="15.2" height="14.6" rx="3.2" fill="#20f0b8" stroke="#5a5a5a" stroke-width=".9"/><rect x="1224.5" y="236.8" width="15.2" height="14.6" rx="3.2" fill="#20c8f8" stroke="#5a5a5a" stroke-width=".9"/><rect x="1242.5" y="236.8" width="15.2" height="14.6" rx="3.2" fill="#3080f0" stroke="#5a5a5a" stroke-width=".9"/><rect x="1260.5" y="236.8" width="15.2" height="14.6" rx="3.2" fill="#3038e8" stroke="#5a5a5a" stroke-width=".9"/><rect x="1278.5" y="236.8" width="15.2" height="14.6" rx="3.2" fill="#9040e8" stroke="#5a5a5a" stroke-width=".9"/><rect x="1296.5" y="236.8" width="15.2" height="14.6" rx="3.2" fill="#d840e8" stroke="#5a5a5a" stroke-width=".9"/><rect x="1314.5" y="236.8" width="15.2" height="14.6" rx="3.2" fill="#f840c8" stroke="#5a5a5a" stroke-width=".9"/><rect x="1332.5" y="236.8" width="15.2" height="14.6" rx="3.2" fill="#f84088" stroke="#5a5a5a" stroke-width=".9"/><rect x="1062.5" y="254.8" width="15.2" height="14.6" rx="3.2" fill="#ff6060" stroke="#5a5a5a" stroke-width=".9"/><rect x="1080.5" y="254.8" width="15.2" height="14.6" rx="3.2" fill="#c09868" stroke="#5a5a5a" stroke-width=".9"/><rect x="1098.5" y="254.8" width="15.2" height="14.6" rx="3.2" fill="#ff8c40" stroke="#5a5a5a" stroke-width=".9"/><rect x="1116.5" y="254.8" width="15.2" height="14.6" rx="3.2" fill="#ffc868" stroke="#5a5a5a" stroke-width=".9"/><rect x="1134.5" y="254.8" width="15.2" height="14.6" rx="3.2" fill="#d0c800" stroke="#5a5a5a" stroke-width=".9"/><rect x="1152.5" y="254.8" width="15.2" height="14.6" rx="3.2" fill="#98c800" stroke="#5a5a5a" stroke-width=".9"/><rect x="1170.5" y="254.8" width="15.2" height="14.6" rx="3.2" fill="#40d020" stroke="#5a5a5a" stroke-width=".9"/><rect x="1188.5" y="254.8" width="15.2" height="14.6" rx="3.2" fill="#68f8c0" stroke="#5a5a5a" stroke-width=".9"/><rect x="1206.5" y="254.8" width="15.2" height="14.6" rx="3.2" fill="#70f8d0" stroke="#5a5a5a" stroke-width=".9"/><rect x="1224.5" y="254.8" width="15.2" height="14.6" rx="3.2" fill="#48d0f8" stroke="#5a5a5a" stroke-width=".9"/><rect x="1242.5" y="254.8" width="15.2" height="14.6" rx="3.2" fill="#60a0f8" stroke="#5a5a5a" stroke-width=".9"/><rect x="1260.5" y="254.8" width="15.2" height="14.6" rx="3.2" fill="#6060f0" stroke="#5a5a5a" stroke-width=".9"/><rect x="1278.5" y="254.8" width="15.2" height="14.6" rx="3.2" fill="#a870f0" stroke="#5a5a5a" stroke-width=".9"/><rect x="1296.5" y="254.8" width="15.2" height="14.6" rx="3.2" fill="#e070f0" stroke="#5a5a5a" stroke-width=".9"/><rect x="1314.5" y="254.8" width="15.2" height="14.6" rx="3.2" fill="#f878d8" stroke="#5a5a5a" stroke-width=".9"/><rect x="1332.5" y="254.8" width="15.2" height="14.6" rx="3.2" fill="#f870a0" stroke="#5a5a5a" stroke-width=".9"/><rect x="1062.5" y="272.8" width="15.2" height="14.6" rx="3.2" fill="#ff9898" stroke="#5a5a5a" stroke-width=".9"/><rect x="1080.5" y="272.8" width="15.2" height="14.6" rx="3.2" fill="#d0b088" stroke="#5a5a5a" stroke-width=".9"/><rect x="1098.5" y="272.8" width="15.2" height="14.6" rx="3.2" fill="#ffa060" stroke="#5a5a5a" stroke-width=".9"/><rect x="1116.5" y="272.8" width="15.2" height="14.6" rx="3.2" fill="#ffd898" stroke="#5a5a5a" stroke-width=".9"/><rect x="1134.5" y="272.8" width="15.2" height="14.6" rx="3.2" fill="#e8e000" stroke="#5a5a5a" stroke-width=".9"/><rect x="1152.5" y="272.8" width="15.2" height="14.6" rx="3.2" fill="#98d000" stroke="#5a5a5a" stroke-width=".9"/><rect x="1170.5" y="272.8" width="15.2" height="14.6" rx="3.2" fill="#48e018" stroke="#5a5a5a" stroke-width=".9"/><rect x="1188.5" y="272.8" width="15.2" height="14.6" rx="3.2" fill="#a0ffd8" stroke="#5a5a5a" stroke-width=".9"/><rect x="1206.5" y="272.8" width="15.2" height="14.6" rx="3.2" fill="#b8ffe8" stroke="#5a5a5a" stroke-width=".9"/><rect x="1224.5" y="272.8" width="15.2" height="14.6" rx="3.2" fill="#78d8f8" stroke="#5a5a5a" stroke-width=".9"/><rect x="1242.5" y="272.8" width="15.2" height="14.6" rx="3.2" fill="#a0c8ff" stroke="#5a5a5a" stroke-width=".9"/><rect x="1260.5" y="272.8" width="15.2" height="14.6" rx="3.2" fill="#9898f0" stroke="#5a5a5a" stroke-width=".9"/><rect x="1278.5" y="272.8" width="15.2" height="14.6" rx="3.2" fill="#c8a8f8" stroke="#5a5a5a" stroke-width=".9"/><rect x="1296.5" y="272.8" width="15.2" height="14.6" rx="3.2" fill="#eca8f8" stroke="#5a5a5a" stroke-width=".9"/><rect x="1314.5" y="272.8" width="15.2" height="14.6" rx="3.2" fill="#ffb0e8" stroke="#5a5a5a" stroke-width=".9"/><rect x="1332.5" y="272.8" width="15.2" height="14.6" rx="3.2" fill="#ff90b0" stroke="#5a5a5a" stroke-width=".9"/><rect x="1062.5" y="290.8" width="15.2" height="14.6" rx="3.2" fill="#ffd0d0" stroke="#5a5a5a" stroke-width=".9"/><rect x="1080.5" y="290.8" width="15.2" height="14.6" rx="3.2" fill="#e8d8b8" stroke="#5a5a5a" stroke-width=".9"/><rect x="1098.5" y="290.8" width="15.2" height="14.6" rx="3.2" fill="#ffb080" stroke="#5a5a5a" stroke-width=".9"/><rect x="1116.5" y="290.8" width="15.2" height="14.6" rx="3.2" fill="#ffe8c8" stroke="#5a5a5a" stroke-width=".9"/><rect x="1134.5" y="290.8" width="15.2" height="14.6" rx="3.2" fill="#fff000" stroke="#5a5a5a" stroke-width=".9"/><rect x="1152.5" y="290.8" width="15.2" height="14.6" rx="3.2" fill="#98e000" stroke="#5a5a5a" stroke-width=".9"/><rect x="1170.5" y="290.8" width="15.2" height="14.6" rx="3.2" fill="#48f018" stroke="#5a5a5a" stroke-width=".9"/><rect x="1188.5" y="290.8" width="15.2" height="14.6" rx="3.2" fill="#e0fff0" stroke="#5a5a5a" stroke-width=".9"/><rect x="1206.5" y="290.8" width="15.2" height="14.6" rx="3.2" fill="#f0fff8" stroke="#5a5a5a" stroke-width=".9"/><rect x="1224.5" y="290.8" width="15.2" height="14.6" rx="3.2" fill="#a8e8f8" stroke="#5a5a5a" stroke-width=".9"/><rect x="1242.5" y="290.8" width="15.2" height="14.6" rx="3.2" fill="#d8e8ff" stroke="#5a5a5a" stroke-width=".9"/><rect x="1260.5" y="290.8" width="15.2" height="14.6" rx="3.2" fill="#d0d0ff" stroke="#5a5a5a" stroke-width=".9"/><rect x="1278.5" y="290.8" width="15.2" height="14.6" rx="3.2" fill="#e8e0ff" stroke="#5a5a5a" stroke-width=".9"/><rect x="1296.5" y="290.8" width="15.2" height="14.6" rx="3.2" fill="#f8e0ff" stroke="#5a5a5a" stroke-width=".9"/><rect x="1314.5" y="290.8" width="15.2" height="14.6" rx="3.2" fill="#ffe0f8" stroke="#5a5a5a" stroke-width=".9"/><rect x="1332.5" y="290.8" width="15.2" height="14.6" rx="3.2" fill="#ffc0d0" stroke="#5a5a5a" stroke-width=".9"/><defs><clipPath id="hc"><rect x="1206.6" y="180.3" width="33" height="33.4" rx="4.5"/></clipPath></defs><rect x="1206.6" y="180.3" width="33" height="33.4" rx="4.5" fill="#fff"/><path d="M1206.5 212.6L1207.7 213.8M1206.5 180.4L1206.7 180.2M1206.5 201.6L1218.7 213.8M1206.5 191.4L1217.7 180.2M1206.5 190.6L1229.7 213.8M1206.5 202.4L1228.7 180.2M1239.8 212.9L1207.1 180.2M1206.5 213.4L1239.7 180.2M1239.8 201.9L1218.1 180.2M1239.8 191.1L1217.1 213.8M1239.8 190.9L1229.1 180.2M1239.8 202.1L1228.1 213.8M1239.8 213.1L1239.1 213.8" stroke="#8f8888" stroke-width=".65" fill="none" clip-path="url(#hc)"/><rect x="1206.6" y="180.3" width="33" height="33.4" rx="4.5" fill="none" stroke="#4a4a4a" stroke-width="1.1"/><rect x="1242.8" y="180.3" width="33" height="33.4" rx="4.5" fill="#fff" stroke="#4a4a4a" stroke-width="1.1"/><g transform="translate(1259.5 197)"><path d="M-10.6 10.2L-9.6 6.6L1.2 -4.6L4.2 -1.8L-7 9.2Z" fill="#dedede" stroke="#8a8a8a" stroke-width=".9" stroke-linejoin="round"/><ellipse cx="6.1" cy="-5.7" rx="5.3" ry="5.7" transform="rotate(40 6.1 -5.7)" fill="#d8d8d8" stroke="#8a8a8a" stroke-width=".9"/></g><rect x="1279.2" y="180.3" width="67.6" height="33" rx="4.5" fill="#fff" stroke="#3a3a3a" stroke-width="2.4"/><rect x="1049" y="318" width="310" height="28.5" fill="#dcdcdc"/><circle cx="1064.3" cy="332" r="8.8" fill="#e2e2e2" stroke="#a6a6a6" stroke-width="1.2"/><path d="M1061 327V337L1070.2 332Z" fill="#8d8d8d"/><text x="1080.5" y="336" font-size="12.5" font-weight="bold" fill="#8a8a8a" font-family="Liberation Sans, sans-serif" textLength="114.5" lengthAdjust="spacingAndGlyphs">Erweiterte Optionen</text><text transform="translate(1169 753.5) skewX(7)" x="0" y="0" font-size="33" font-style="italic" fill="#111" stroke="#111" stroke-width=".5" font-family="Liberation Serif, serif" textLength="165" lengthAdjust="spacingAndGlyphs">BlogOhneNamen</text><g transform="translate(1357.9 744)" fill="#3a9ad0"><rect x="-1.9" y="-9" width="3.8" height="5" rx="1.2" transform="rotate(0)"/><rect x="-1.9" y="-9" width="3.8" height="5" rx="1.2" transform="rotate(45)"/><rect x="-1.9" y="-9" width="3.8" height="5" rx="1.2" transform="rotate(90)"/><rect x="-1.9" y="-9" width="3.8" height="5" rx="1.2" transform="rotate(135)"/><rect x="-1.9" y="-9" width="3.8" height="5" rx="1.2" transform="rotate(180)"/><rect x="-1.9" y="-9" width="3.8" height="5" rx="1.2" transform="rotate(225)"/><rect x="-1.9" y="-9" width="3.8" height="5" rx="1.2" transform="rotate(270)"/><rect x="-1.9" y="-9" width="3.8" height="5" rx="1.2" transform="rotate(315)"/><circle r="6.5"/><circle r="3.2" fill="#fff"/></g><g transform="translate(1382 743.6)" fill="none" stroke-width="2.4"><path d="M7.2 -0.6A7.2 7.2 0 0 0 0.8 -7.2" stroke="#1fa5d0"/><path d="M-3.2 -7.4L1.6 -10.2L2 -4.2Z" fill="#1fa5d0" stroke="none"/><path d="M-4.2 -5.8A7.2 7.2 0 0 0 -6.9 2.2" stroke="#217f99"/><path d="M-9.6 1.4L-3.8 2.6L-5.4 7Z" fill="#217f99" stroke="none"/><path d="M-3.6 6.3A7.2 7.2 0 0 0 5.4 4.8" stroke="#9fd3ea"/><path d="M3.2 3.2L7.8 2L7.6 7.4Z" fill="#9fd3ea" stroke="none"/></g></svg>
</div></div>
</body></html>
